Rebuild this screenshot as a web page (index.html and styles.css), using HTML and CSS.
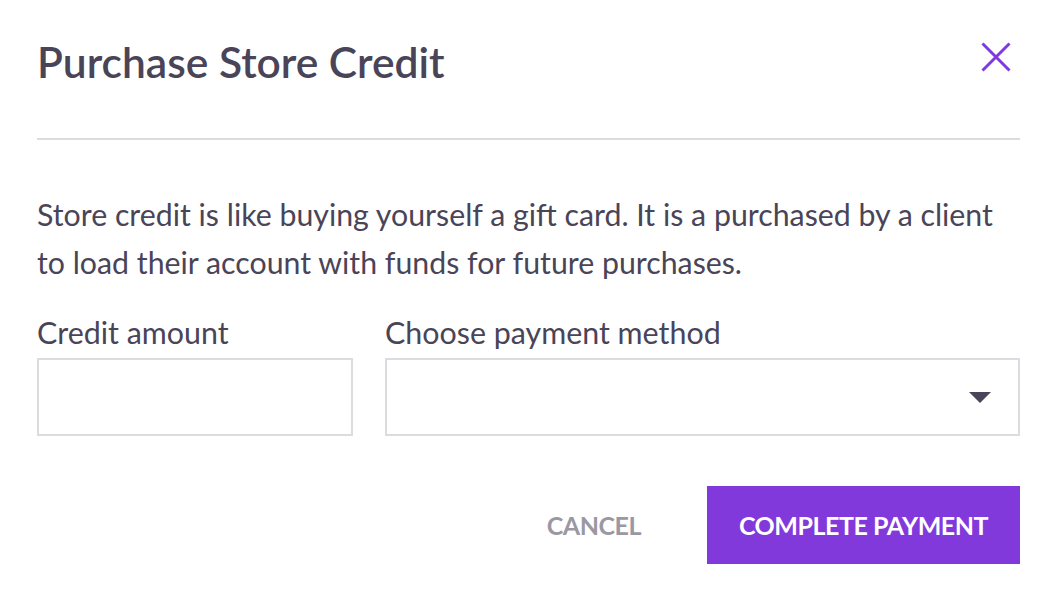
FILE: index.html
```html
<!DOCTYPE html>
<html lang="en">
<head>
<meta charset="utf-8">
<title>Purchase Store Credit</title>
<link rel="stylesheet" href="styles.css">
</head>
<body>
<div class="modal">
  <header class="modal-header">
    <h1 class="modal-title">Purchase Store Credit</h1>
    <button class="close-btn" type="button" aria-label="Close">
      <svg width="30" height="30" viewBox="0 0 30 30"><path d="M1.5 1.5 L28.5 28.5 M28.5 1.5 L1.5 28.5" stroke="#7f3adf" stroke-width="3" fill="none"/></svg>
    </button>
  </header>
  <div class="modal-body">
    <p class="intro">Store credit is like buying yourself a gift card. It is a purchased by a client to load their account with funds for future purchases.</p>
    <div class="fields">
      <label class="field">
        <span class="field-label">Credit amount</span>
        <input class="field-input" type="text">
      </label>
      <label class="field">
        <span class="field-label">Choose payment method</span>
        <span class="select-box">
          <svg class="caret" width="22" height="11" viewBox="0 0 22 11"><path d="M0 0 H22 L11 11 Z" fill="#4a4458"/></svg>
        </span>
      </label>
    </div>
  </div>
  <footer class="actions">
    <button class="btn-cancel" type="button">CANCEL</button>
    <button class="btn-primary" type="button">COMPLETE PAYMENT</button>
  </footer>
</div>
</body>
</html>
```
FILE: styles.css
```css
* { box-sizing: border-box; }
html, body { margin: 0; padding: 0; background: #fff; }
body {
  font-family: "Lato", "Liberation Sans", sans-serif;
  color: #4a4458;
}
.modal {
  width: 1040px;
  padding: 0 20px 0 37px;
}
.modal-header {
  display: flex;
  justify-content: space-between;
  align-items: flex-start;
  padding-top: 30px;
  height: 140px;
  border-bottom: 2px solid #dcdbe0;
}
.modal-title {
  margin: 0;
  font-size: 42.5px;
  line-height: 64px;
  font-weight: 600;
  color: #4a4458;
}
.close-btn {
  margin: 12px 9px 0 0;
  padding: 0;
  border: 0;
  background: none;
  width: 30px;
  height: 30px;
  display: flex;
}
.modal-body {
  padding-top: 50px;
}
.intro {
  margin: 0;
  font-size: 30.3px;
  line-height: 48px;
}
.fields {
  display: grid;
  grid-template-columns: 316px 1fr;
  gap: 32px;
  margin-top: 23px;
}
.field {
  display: flex;
  flex-direction: column;
}
.field-label {
  font-size: 30.4px;
  line-height: 47px;
  margin-bottom: 2px;
}
.field-input, .select-box {
  height: 78px;
  border: 2px solid #dcdbe0;
  background: #fff;
  width: 100%;
  margin: 0;
  font: inherit;
}
.select-box {
  display: flex;
  align-items: center;
  justify-content: flex-end;
  padding-right: 27px;
}
.caret { display: block; }
.actions {
  display: flex;
  justify-content: flex-end;
  align-items: center;
  margin-top: 50px;
}
.btn-cancel, .btn-primary {
  font-family: inherit;
  font-size: 25px;
  font-weight: 700;
  border: 0;
  height: 78px;
  letter-spacing: -0.45px;
}
.btn-cancel {
  background: none;
  color: #9a98a3;
  padding: 0 66px 0 0;
}
.btn-primary {
  width: 313px;
  background: #8239dc;
  color: #fff;
}
```
